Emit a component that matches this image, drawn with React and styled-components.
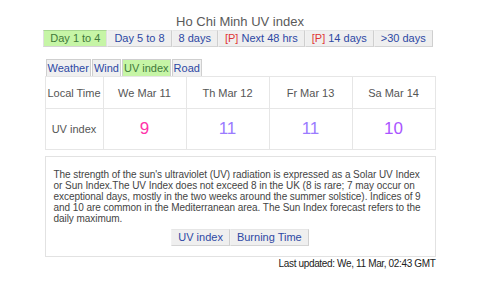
import React from "react";
import styled, { createGlobalStyle } from "styled-components";

const Global = createGlobalStyle`
  html, body { margin: 0; padding: 0; background: #fff; }
  body { font-family: "Liberation Sans", Arial, sans-serif; color: #444; }
`;

const Page = styled.div`
  width: 391px;
  margin: 0 auto;
  padding-top: 13px;
  display: flex;
  flex-direction: column;
`;

const Title = styled.h1`
  margin: 0;
  font-size: 13px;
  font-weight: normal;
  color: #5a5a5a;
  text-align: center;
  line-height: 17px;
`;

const Nav = styled.div`
  display: flex;
  justify-content: center;
  margin-left: -4px;
`;

const NavButton = styled.a`
  display: block;
  font-size: 11px;
  line-height: 15px;
  padding: 0 6px;
  background: ${(p) => (p.$active ? "#c6f5a6" : "#efefef")};
  color: ${(p) => (p.$active ? "#3f7a3a" : "#2d48a4")};
  border-style: solid;
  border-width: 1px;
  border-color: ${(p) =>
    p.$active ? "#a8d890 #e0e0e0 #d4d4d4 #e0e0e0" : "#e6e6e6 #cfcfcf #d4d4d4 #f2f2f2"};
  white-space: nowrap;
`;

const P = styled.span`
  color: #e03535;
`;

const Tabs = styled.div`
  display: flex;
  margin-top: 12px;
  margin-left: 1px;
`;

const Tab = styled.a`
  display: block;
  font-size: 11px;
  line-height: 16px;
  padding: 0 1px;
  background: ${(p) => (p.$active ? "#c6f5a6" : "#f0f0f0")};
  color: ${(p) => (p.$active ? "#3f7a3a" : "#2d48a4")};
  border: 1px solid #cfcfcf;
  border-bottom: none;
  margin-right: 1px;
`;

const Table = styled.table`
  border-collapse: collapse;
  width: 391px;
  table-layout: fixed;
  border: 1px solid #e6e6e6;
`;

const Cell = styled.td`
  border: 1px solid #e6e6e6;
  text-align: center;
  font-size: 11px;
  color: #555;
  padding: 0;
  height: ${(p) => p.$h}px;
  white-space: nowrap;
`;

const Value = styled.span`
  font-size: 17px;
  color: ${(p) => p.$color};
`;

const Info = styled.div`
  margin-top: 6px;
  border: 1px solid #e2e2e2;
  padding: 12px 8px 10px 8px;
  display: flex;
  flex-direction: column;
`;

const InfoText = styled.p`
  margin: 0;
  font-size: 10px;
  line-height: 11px;
  letter-spacing: -0.05px;
  color: #444;
`;

const SubNav = styled.div`
  display: flex;
  justify-content: center;
  margin-top: 5px;
`;

const Footer = styled.div`
  text-align: right;
  font-size: 10px;
  letter-spacing: -0.35px;
  color: #222;
  margin-top: 0;
  line-height: 13px;
`;

const days = [
  { label: "We Mar 11", uv: 9, color: "#ff33aa" },
  { label: "Th Mar 12", uv: 11, color: "#9b7bff" },
  { label: "Fr Mar 13", uv: 11, color: "#9b7bff" },
  { label: "Sa Mar 14", uv: 10, color: "#aa55ff" },
];

export default function App() {
  return (
    <>
      <Global />
      <Page>
        <Title>Ho Chi Minh UV index</Title>
        <Nav>
          <NavButton $active>Day 1 to 4</NavButton>
          <NavButton>Day 5 to 8</NavButton>
          <NavButton>8 days</NavButton>
          <NavButton>
            <P>[P]</P> Next 48 hrs
          </NavButton>
          <NavButton>
            <P>[P]</P> 14 days
          </NavButton>
          <NavButton>&gt;30 days</NavButton>
        </Nav>
        <Tabs>
          <Tab>Weather</Tab>
          <Tab>Wind</Tab>
          <Tab $active>UV index</Tab>
          <Tab>Road</Tab>
        </Tabs>
        <Table>
          <colgroup>
            <col style={{ width: 58 }} />
            <col />
            <col />
            <col />
            <col />
          </colgroup>
          <tbody>
            <tr>
              <Cell $h={31}>Local Time</Cell>
              {days.map((d) => (
                <Cell key={d.label} $h={31}>
                  {d.label}
                </Cell>
              ))}
            </tr>
            <tr>
              <Cell $h={40}>UV index</Cell>
              {days.map((d) => (
                <Cell key={d.label} $h={40}>
                  <Value $color={d.color}>{d.uv}</Value>
                </Cell>
              ))}
            </tr>
          </tbody>
        </Table>
        <Info>
          <InfoText>
            The strength of the sun's ultraviolet (UV) radiation is expressed as a Solar UV Index
            or Sun Index.The UV Index does not exceed 8 in the UK (8 is rare; 7 may occur on
            exceptional days, mostly in the two weeks around the summer solstice). Indices of 9
            and 10 are common in the Mediterranean area. The Sun Index forecast refers to the
            daily maximum.
          </InfoText>
          <SubNav>
            <NavButton>UV index</NavButton>
            <NavButton>Burning Time</NavButton>
          </SubNav>
        </Info>
        <Footer>Last updated: We, 11 Mar, 02:43 GMT</Footer>
      </Page>
    </>
  );
}
